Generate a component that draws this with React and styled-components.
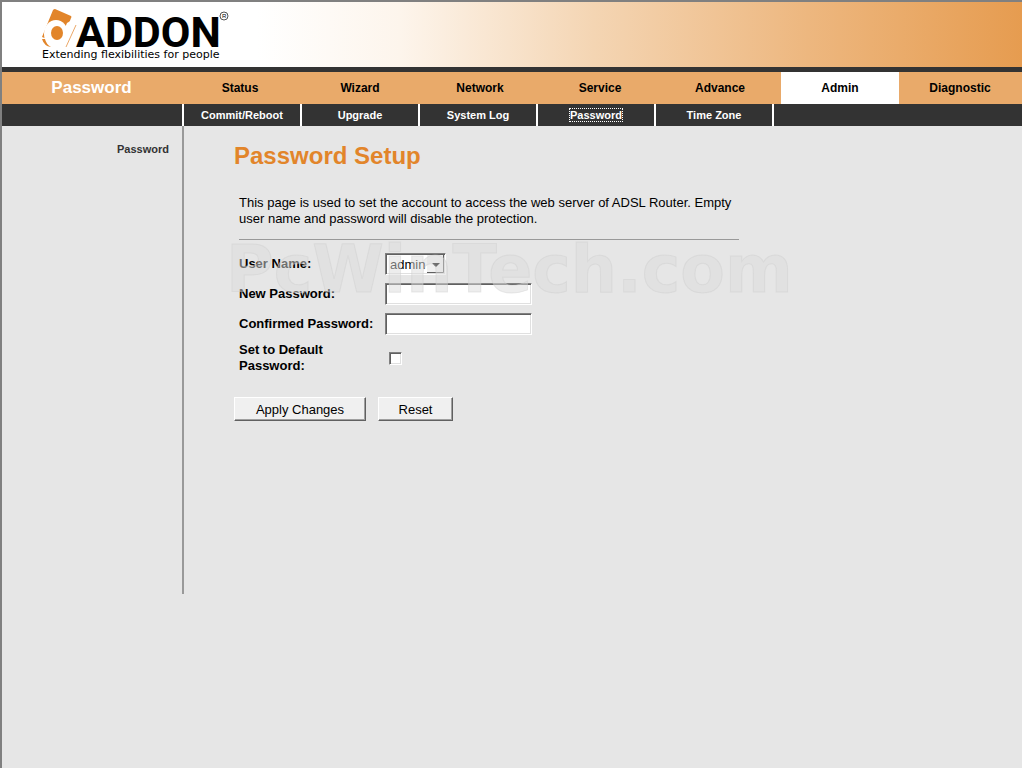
import { useState } from "react";
import styled, { createGlobalStyle } from "styled-components";

const tabs = ["Status", "Wizard", "Network", "Service", "Advance", "Admin", "Diagnostic"];
const subTabs = ["Commit/Reboot", "Upgrade", "System Log", "Password", "Time Zone"];

const GlobalStyle = createGlobalStyle`
  * {
    box-sizing: border-box;
  }
  body {
    margin: 0;
    background: #e6e6e6;
    color: #000;
    font-family: "Liberation Sans", Arial, sans-serif;
    font-size: 13px;
    line-height: 16px;
  }
`;

const Page = styled.div`
  min-height: 100vh;
  border-top: 2px solid #808080;
  border-left: 2px solid #808080;
`;

const Banner = styled.header`
  height: 70px;
  padding: 5px 36px;
  border-bottom: 5px solid #333;
  background: linear-gradient(90deg, #fff 25%, #fdf5ec 39%, #f4d5b3 58%, #edb77f 79%, #e69c50 100%);
`;

const NavBar = styled.nav`
  display: flex;
  height: 32px;
  padding-right: 3px;
  background: #e9aa6a;
`;

const SectionName = styled.div`
  width: 179px;
  color: #fff;
  font-size: 17px;
  font-weight: bold;
  line-height: 32px;
  text-align: center;
`;

const Tabs = styled.div`
  flex: 1;
  display: grid;
  grid-template-columns: repeat(7, 1fr);
  column-gap: 2px;
`;

const Tab = styled.a`
  background: ${(props) => (props.$active ? "#fff" : "transparent")};
  color: #000;
  font-size: 12px;
  font-weight: bold;
  line-height: 32px;
  text-align: center;
  text-decoration: none;
`;

const SubNav = styled.nav`
  display: flex;
  height: 22px;
  padding-left: 180px;
  background: #333;
`;

const SubTab = styled.div`
  width: 118px;
  border-left: 2px solid #fff;
  text-align: center;

  &:last-child {
    width: 120px;
    border-right: 2px solid #fff;
  }
`;

const SubLink = styled.a`
  color: #fff;
  font-size: 11px;
  font-weight: bold;
  line-height: 22px;
  text-decoration: none;
  outline: ${(props) => (props.$active ? "1px dotted #fff" : "none")};
`;

const Body = styled.div`
  display: flex;
`;

const Sidebar = styled.aside`
  width: 182px;
  height: 468px;
  padding: 15px 13px;
  border-right: 2px solid #999;
  text-align: right;
`;

const SideLink = styled.a`
  color: #333;
  font-size: 11px;
  font-weight: bold;
  text-decoration: none;
`;

const Content = styled.main`
  flex: 1;
  padding: 16px 50px;
`;

const Title = styled.h1`
  margin: 0 0 25px;
  color: #e2852a;
  font-size: 24px;
  line-height: 28px;
`;

const Intro = styled.p`
  max-width: 500px;
  margin: 0 0 0 5px;
  padding-bottom: 12px;
  border-bottom: 1px solid #999;
`;

const Form = styled.form`
  position: relative;
  padding-top: 9px;
`;

const Field = styled.div`
  display: grid;
  grid-template-columns: 146px 1fr;
  align-items: center;
  min-height: ${(props) => (props.$tall ? "38px" : "30px")};
  padding-left: 5px;
`;

const Label = styled.label`
  max-width: 140px;
  font-weight: bold;
`;

const sunken = `
  border: 1px solid;
  border-color: #808080 #fff #fff #808080;
  border-radius: 0;
  background: #fff;
  box-shadow: inset 1px 1px #606060, inset -1px -1px #e0e0e0;
`;

const TextBox = styled.input`
  width: 147px;
  height: 22px;
  padding: 2px 4px;
  ${sunken}
`;

const SelectWrap = styled.div`
  position: relative;
  width: 61px;
  height: 22px;
`;

const Select = styled.select`
  width: 100%;
  height: 100%;
  padding: 0 4px;
  appearance: none;
  color: #000;
  font: 13px "Liberation Sans", Arial, sans-serif;
  ${sunken}
`;

const Arrow = styled.svg`
  position: absolute;
  top: 2px;
  right: 2px;
  pointer-events: none;
`;

const CheckBox = styled.input`
  width: 13px;
  height: 13px;
  margin: 0 4px;
  appearance: none;
  ${sunken}

  &:checked {
    background: #333;
  }
`;

const Actions = styled.div`
  display: flex;
  gap: 12px;
  padding-top: 20px;
`;

const Button = styled.button`
  width: ${(props) => (props.$wide ? "132px" : "75px")};
  height: 24px;
  padding: 0;
  border: 1px solid;
  border-color: #fff #606060 #606060 #fff;
  background: #f0f0f0;
  box-shadow: inset -1px -1px #a0a0a0;
  color: #000;
  font: 13px "Liberation Sans", Arial, sans-serif;
`;

const Watermark = styled.div`
  position: absolute;
  top: -10px;
  left: -8px;
  color: rgba(220, 220, 220, 0.5);
  font: bold 65px/80px "DejaVu Sans", Verdana, sans-serif;
  -webkit-text-stroke: 1px rgba(205, 205, 205, 0.4);
  white-space: nowrap;
  pointer-events: none;
`;

const Logo = () => (
  <svg width="200" height="58" viewBox="0 0 200 58" role="img" aria-label="ADDON">
    <path d="M17 2 L33 9 Q34 10 33 11 L23 38 L4 30 L15 3 Q16 2 17 2 Z" fill="#e2852a" />
    <ellipse cx="18" cy="27" rx="12" ry="14" fill="#fff" />
    <path d="M29 16 L34 13 L26 41 L18 41 Z" fill="#fff" />
    <ellipse cx="19" cy="26" rx="6" ry="7" fill="#e2852a" />
    <path d="M4 32 Q6 39 13 40 Q8 37 7 32 Z" fill="#e2852a" />
    <path d="M38 18 L28 40" fill="none" stroke="#eba869" />
    <text x="38" y="40" fontFamily="Roboto" fontSize="43" fontWeight="700">
      ADDON
    </text>
    <text x="4" y="51" fontFamily="DejaVu Sans" fontSize="11">
      Extending flexibilities for people
    </text>
    <circle cx="186" cy="9" r="4" fill="none" stroke="#555" />
    <text x="184" y="11" fontFamily="Liberation Sans" fontSize="6">
      R
    </text>
  </svg>
);

function App() {
  const [user, setUser] = useState("admin");

  return (
    <Page>
      <GlobalStyle />
      <Banner>
        <Logo />
      </Banner>
      <NavBar>
        <SectionName>Password</SectionName>
        <Tabs>
          {tabs.map((tab) => (
            <Tab key={tab} href="#" $active={tab === "Admin"}>
              {tab}
            </Tab>
          ))}
        </Tabs>
      </NavBar>
      <SubNav>
        {subTabs.map((tab) => (
          <SubTab key={tab}>
            <SubLink href="#" $active={tab === "Password"}>
              {tab}
            </SubLink>
          </SubTab>
        ))}
      </SubNav>
      <Body>
        <Sidebar>
          <SideLink href="#">Password</SideLink>
        </Sidebar>
        <Content>
          <Title>Password Setup</Title>
          <Intro>
            This page is used to set the account to access the web server of ADSL
            Router. Empty user name and password will disable the protection.
          </Intro>
          <Form onSubmit={(e) => e.preventDefault()}>
            <Field>
              <Label htmlFor="user">User Name:</Label>
              <SelectWrap>
                <Select id="user" value={user} onChange={(e) => setUser(e.target.value)}>
                  <option>admin</option>
                  <option>user</option>
                </Select>
                <Arrow width="17" height="18" viewBox="0 0 17 18">
                  <path d="M0 0H17V18H0Z" fill="#f0f0f0" />
                  <path d="M0 17.5H16.5V0" fill="none" stroke="#606060" />
                  <path d="M5 8H13L9 12Z" />
                </Arrow>
              </SelectWrap>
            </Field>
            <Field>
              <Label htmlFor="newpass">New Password:</Label>
              <TextBox id="newpass" type="password" />
            </Field>
            <Field>
              <Label htmlFor="confpass">Confirmed Password:</Label>
              <TextBox id="confpass" type="password" />
            </Field>
            <Field $tall>
              <Label htmlFor="default">Set to Default Password:</Label>
              <CheckBox id="default" type="checkbox" />
            </Field>
            <Actions>
              <Button type="submit" $wide>
                Apply Changes
              </Button>
              <Button type="reset">Reset</Button>
            </Actions>
            <Watermark>PcWinTech.com</Watermark>
          </Form>
        </Content>
      </Body>
    </Page>
  );
}

export default App;
